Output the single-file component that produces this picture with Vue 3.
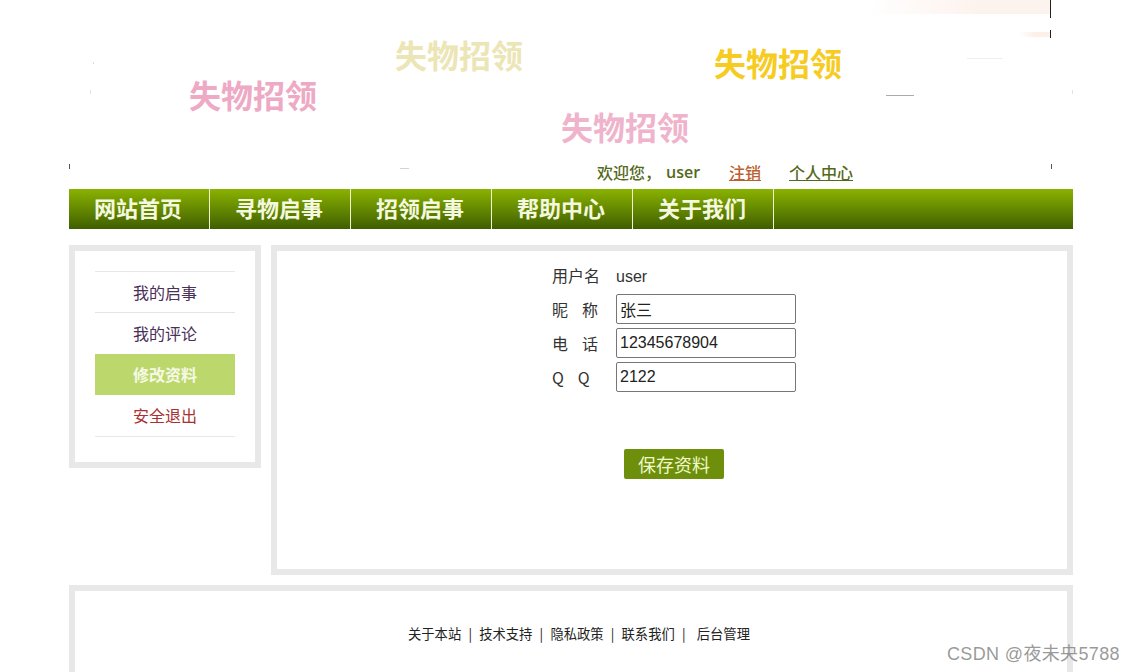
<script setup>
const banner = [
  { text: '失物招领', cls: 'w1' },
  { text: '失物招领', cls: 'w2' },
  { text: '失物招领', cls: 'w3' },
  { text: '失物招领', cls: 'w4' },
]
const nav = ['网站首页', '寻物启事', '招领启事', '帮助中心', '关于我们']
const side = [
  { text: '我的启事', cls: 'plum' },
  { text: '我的评论', cls: 'plum' },
  { text: '修改资料', cls: 'active' },
  { text: '安全退出', cls: 'red' },
]
const fields = [
  { label: '昵  称', value: '张三' },
  { label: '电  话', value: '12345678904' },
  { label: 'Q  Q', value: '2122' },
]
const links = ['关于本站', '技术支持', '隐私政策', '联系我们']
</script>

<template>
  <div class="page">
    <div class="wrap">
      <header class="banner">
        <span v-for="b in banner" :key="b.cls" class="word" :class="b.cls">{{ b.text }}</span>
        <i class="peach p1"></i>
        <i class="peach p2"></i>
        <i class="tick t1"></i>
        <i class="tick t2"></i>
        <i class="dash d1"></i>
        <i class="dash d2"></i>
        <i class="dash d3"></i>
        <i class="dot k1"></i>
        <i class="dot k2"></i>
        <i class="dot k3"></i>
        <i class="dot k4"></i>
        <i class="dot k5"></i>
        <div class="welcome">
          <span class="hello">欢迎您，</span>
          <span class="uname">user</span>
          <a class="logout">注销</a>
          <a class="center">个人中心</a>
        </div>
      </header>

      <nav class="nav">
        <a v-for="n in nav" :key="n" class="nav-item">{{ n }}</a>
      </nav>

      <div class="content">
        <aside class="side">
          <ul class="side-list">
            <li v-for="s in side" :key="s.text" class="side-item" :class="s.cls">{{ s.text }}</li>
          </ul>
        </aside>
        <main class="main">
          <div class="form">
            <div class="row row-user">
              <span class="lbl">用户名</span>
              <span class="val">user</span>
            </div>
            <div v-for="f in fields" :key="f.label" class="row">
              <span class="lbl">{{ f.label }}</span>
              <input class="inp" type="text" :value="f.value" />
            </div>
            <button class="save" type="button">保存资料</button>
          </div>
        </main>
      </div>

      <footer class="foot">
        <template v-for="l in links" :key="l">
          <a class="foot-link">{{ l }}</a>
          <span class="sep">|</span>
        </template>
        <a class="foot-link admin">后台管理</a>
      </footer>
    </div>
    <div class="mark">CSDN @夜未央5788</div>
  </div>
</template>

<style>
html, body { margin: 0; background: #fff; overflow: hidden; }
</style>

<style scoped>
.page {
  position: relative;
  width: 1134px;
  height: 672px;
  overflow: hidden;
  background: #fff;
  font-family: "Noto Sans CJK SC", "Liberation Sans", sans-serif;
}
.wrap { width: 1004px; margin-left: 69px; }

.banner { position: relative; height: 189px; }
.word {
  position: absolute;
  font-size: 32px;
  font-weight: 700;
  line-height: 40px;
  white-space: nowrap;
}
.w1 { left: 120px; top: 74px; color: #eea9c4; }
.w2 { left: 326px; top: 34px; color: #ece5b6; }
.w3 { left: 645px; top: 42px; color: #f5cc1f; }
.w4 { left: 492px; top: 106px; color: #efb3cc; }

.peach { position: absolute; }
.p1 {
  left: 800px;
  top: 0;
  width: 181px;
  height: 14px;
  background: linear-gradient(90deg, rgba(253, 243, 238, 0), #fdf3ee 60%);
}
.p2 {
  left: 950px;
  top: 32px;
  width: 31px;
  height: 5px;
  background: linear-gradient(90deg, rgba(253, 240, 232, 0), #fdf0e8 50%);
}
.tick { position: absolute; width: 1px; background: #222; left: 981px; }
.t1 { top: 0; height: 18px; }
.t2 { top: 30px; height: 8px; }
.dash { position: absolute; height: 1px; }
.d1 { left: 817px; top: 95px; width: 28px; background: #aaa; }
.d2 { left: 331px; top: 168px; width: 9px; background: #d4d4d4; }
.d3 { left: 898px; top: 58px; width: 36px; background: #eee; }
.dot { position: absolute; width: 1px; height: 5px; background: #555; top: 164px; }
.k1 { left: 0; }
.k2 { left: 982px; }
.k3 { left: 24px; top: 62px; height: 2px; background: #ddd; }
.k4 { left: 21px; top: 90px; height: 4px; background: #e2e2e2; }
.k5 { left: 1003px; top: 90px; height: 4px; background: #e2e2e2; }

.welcome {
  position: absolute;
  left: 528px;
  top: 161px;
  display: flex;
  align-items: center;
  font-size: 16px;
  font-weight: 500;
  line-height: 22px;
  color: #55691c;
  white-space: nowrap;
}
.hello { width: 69px; }
.uname { width: 63px; font-family: "Open Sans", "Liberation Sans", sans-serif; font-weight: 600; }
.logout { width: 60px; color: #b9602f; text-decoration: underline; }
.center { color: #55691c; text-decoration: underline; }

.nav {
  display: flex;
  height: 40px;
  background: linear-gradient(#8ab300, #3f5e00);
}
.nav-item {
  box-sizing: border-box;
  width: 141px;
  height: 40px;
  padding-left: 25px;
  border-right: 1px solid #f2f5cf;
  font-size: 22px;
  font-weight: 700;
  line-height: 36px;
  color: #f3f8df;
  white-space: nowrap;
}

.content { display: flex; gap: 10px; margin-top: 16px; align-items: flex-start; }
.side {
  box-sizing: border-box;
  width: 192px;
  height: 223px;
  border: 6px solid #e8e8e8;
  padding: 20px 20px 0;
}
.side-list {
  list-style: none;
  margin: 0;
  padding: 0;
  border-top: 1px solid #e8e8e8;
  border-bottom: 1px solid #e8e8e8;
}
.side-item {
  box-sizing: border-box;
  height: 41px;
  line-height: 41px;
  text-align: center;
  font-size: 16px;
}
.side-item:first-child { border-bottom: 1px solid #e4e4e4; line-height: 40px; }
.plum { color: #4a2f58; }
.red { color: #a83232; }
.active { background: #bcd86c; color: #f6f9e6; font-weight: 700; }

.main {
  box-sizing: border-box;
  width: 802px;
  height: 330px;
  border: 6px solid #e8e8e8;
  padding-top: 13px;
}
.form { width: 244px; margin-left: 275px; }
.row {
  display: flex;
  align-items: center;
  height: 30px;
  margin-bottom: 4px;
}
.row-user { height: 24px; margin-bottom: 6px; }
.row-user .lbl { margin-top: -2px; }
.row-user .val { margin-top: 2px; }
.lbl {
  width: 64px;
  flex: none;
  font-size: 16px;
  color: #333;
  white-space: pre;
  word-spacing: 3.4px;
}
.val {
  font-family: "Liberation Sans", sans-serif;
  font-size: 16px;
  color: #333;
}
.inp {
  box-sizing: border-box;
  width: 180px;
  height: 30px;
  padding: 1px 3px;
  border: 1px solid #767676;
  border-radius: 2px;
  background: #fff;
  color: #222;
  font-family: "Liberation Sans", "Noto Sans CJK SC", sans-serif;
  font-size: 16px;
  outline: none;
}
.save {
  display: block;
  width: 100px;
  height: 30px;
  margin: 57px 0 0 72px;
  padding: 0;
  border: none;
  border-radius: 2px;
  background: #6e8f0c;
  color: #f0f8c8;
  font-family: inherit;
  font-size: 18px;
  line-height: 30px;
}

.foot {
  box-sizing: border-box;
  height: 120px;
  margin-top: 10px;
  border: 6px solid #e8e8e8;
  padding: 33px 0 0 333px;
  display: flex;
  align-items: flex-start;
  font-size: 13.3px;
  line-height: 20px;
  color: #222;
  white-space: nowrap;
}
.sep { width: 18px; text-align: center; }
.admin { margin-left: 4px; }

.mark {
  position: absolute;
  left: 947px;
  top: 642px;
  font-family: "Liberation Sans", "Noto Sans CJK SC", sans-serif;
  font-size: 18px;
  letter-spacing: 0.35px;
  line-height: 24px;
  color: rgba(120, 120, 120, 0.75);
  white-space: nowrap;
}
</style>
